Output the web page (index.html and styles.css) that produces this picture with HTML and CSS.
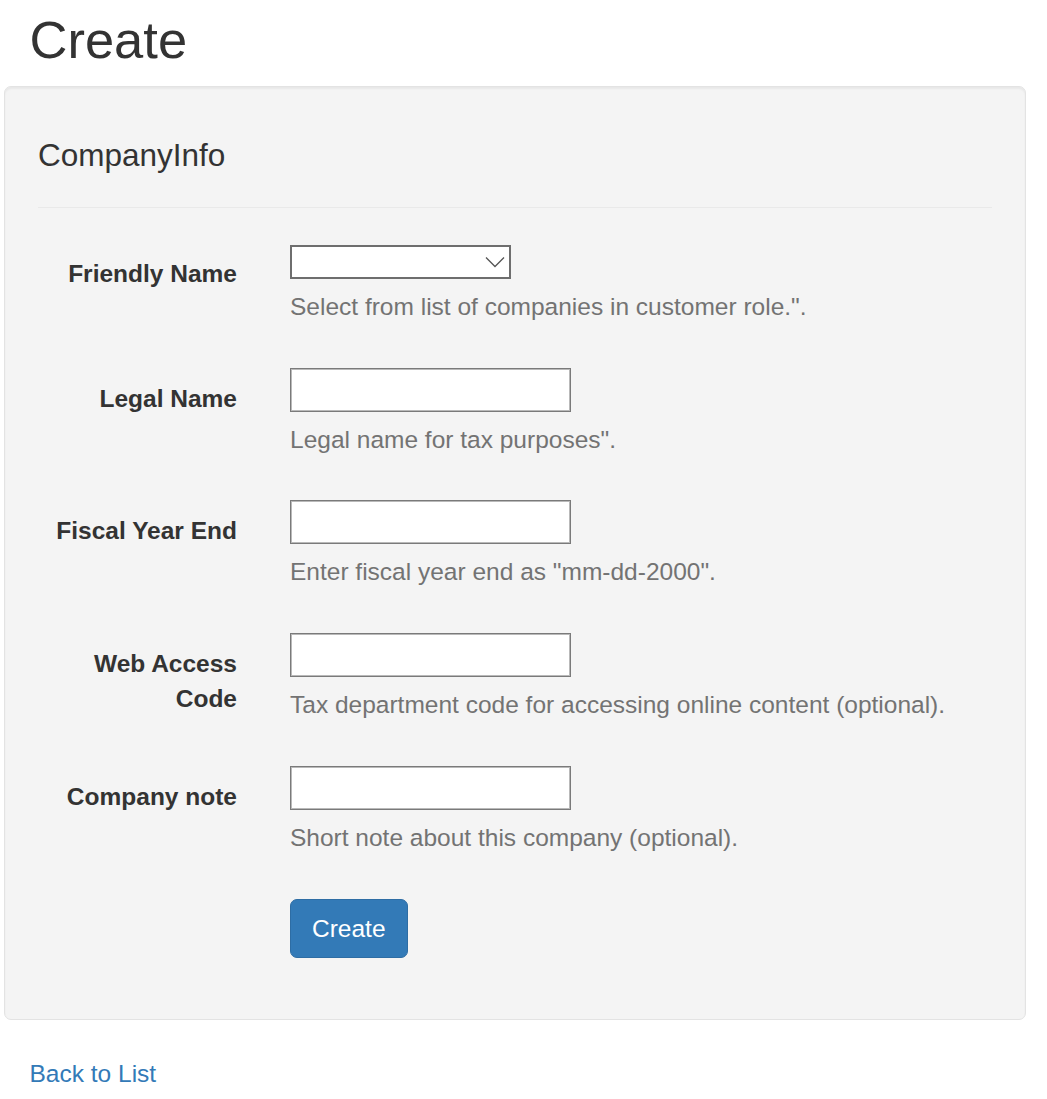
FILE: index.html
```html
<!DOCTYPE html>
<html lang="en">
<head>
<meta charset="utf-8">
<title>Create</title>
<link rel="stylesheet" href="styles.css">
</head>
<body>
<div class="page">
  <h2 class="title">Create</h2>
  <form class="well">
    <h4 class="section-title">CompanyInfo</h4>
    <hr class="divider">

    <div class="form-group">
      <label class="control-label">Friendly Name</label>
      <div class="field">
        <div class="select-wrap">
          <select class="select"><option></option></select>
          <svg class="chevron" width="20" height="12" viewBox="0 0 20 12"><polyline points="1,1.5 10,10.5 19,1.5" fill="none" stroke="#555" stroke-width="1.3"/></svg>
        </div>
        <div class="help">Select from list of companies in customer role.".</div>
      </div>
    </div>

    <div class="form-group">
      <label class="control-label">Legal Name</label>
      <div class="field">
        <input class="input" type="text">
        <div class="help">Legal name for tax purposes".</div>
      </div>
    </div>

    <div class="form-group">
      <label class="control-label">Fiscal Year End</label>
      <div class="field">
        <input class="input" type="text">
        <div class="help">Enter fiscal year end as "mm-dd-2000".</div>
      </div>
    </div>

    <div class="form-group">
      <label class="control-label">Web Access Code</label>
      <div class="field">
        <input class="input" type="text">
        <div class="help">Tax department code for accessing online content (optional).</div>
      </div>
    </div>

    <div class="form-group">
      <label class="control-label">Company note</label>
      <div class="field">
        <input class="input" type="text">
        <div class="help">Short note about this company (optional).</div>
      </div>
    </div>

    <div class="form-group last">
      <div></div>
      <div class="field">
        <button type="button" class="btn">Create</button>
      </div>
    </div>
  </form>

  <div class="back"><a href="#" class="link">Back to List</a></div>
</div>
</body>
</html>
```

FILE: styles.css
```css
html, body {
  margin: 0;
  padding: 0;
  background: #fff;
}

body {
  font-family: "Liberation Sans", Arial, sans-serif;
  font-size: 24.5px;
  line-height: 35px;
  color: #333;
}

.page {
  padding: 0 21px 0 4px;
}

.title {
  margin: 10.5px 0 17.5px 25.5px;
  font-size: 52.5px;
  line-height: 57.75px;
  font-weight: 400;
  color: #333;
}

.well {
  display: block;
  margin: 0 0 36px 0;
  padding: 33px 33px 34.5px 33px;
  background: #f4f4f4;
  border: 1px solid #e3e3e3;
  border-radius: 7px;
  box-shadow: inset 0 2px 2px rgba(0, 0, 0, 0.05);
}

.section-title {
  margin: 18.5px 0 0 0;
  font-size: 31.5px;
  line-height: 34.65px;
  font-weight: 400;
  color: #333;
}

.divider {
  margin: 34px 0 35px 0;
  border: 0;
  border-top: 1px solid #e9e9e9;
  height: 0;
}

.form-group {
  display: grid;
  grid-template-columns: 199px 1fr;
  column-gap: 53px;
  margin-bottom: 26.25px;
}

.control-label {
  padding-top: 13px;
  text-align: right;
  font-weight: 700;
  color: #333;
}

.field {
  display: flex;
  flex-direction: column;
  align-items: flex-start;
}

.select-wrap {
  position: relative;
  margin-top: 2px;
  width: 221px;
  height: 34px;
}

.select {
  -webkit-appearance: none;
  appearance: none;
  display: block;
  width: 221px;
  height: 34px;
  margin: 0;
  padding: 0 8px;
  border: 2px solid #6e6e6e;
  border-radius: 0;
  background: #fff;
  font-family: inherit;
  font-size: 20px;
  box-sizing: border-box;
}

.chevron {
  position: absolute;
  left: 195px;
  top: 11px;
  pointer-events: none;
}

.input {
  display: block;
  width: 281px;
  height: 44px;
  margin: 0;
  padding: 0 8px;
  border: 1px solid #7a7a7a;
  box-shadow: inset 0 0 0 1px #b9b9b9;
  border-radius: 0;
  background: #fff;
  box-sizing: border-box;
  font-family: inherit;
  font-size: 24.5px;
}

.help {
  margin-top: 10px;
  margin-bottom: 17.5px;
  color: #737373;
}

.btn {
  display: inline-block;
  height: 59.5px;
  padding: 0 21px;
  background: #337ab7;
  border: 1px solid #2e6da4;
  border-radius: 7px;
  color: #fff;
  font-family: inherit;
  font-size: 24.5px;
  line-height: 35px;
  cursor: pointer;
}

.back {
  padding-left: 25.5px;
}

.link {
  color: #337ab7;
  text-decoration: none;
}
```
